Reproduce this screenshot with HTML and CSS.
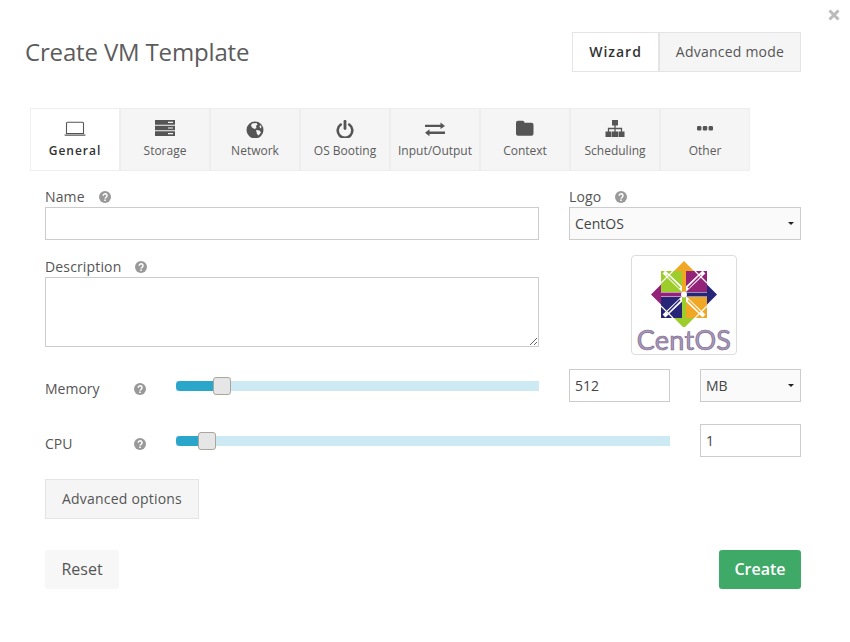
FILE: index.html
```html
<!DOCTYPE html>
<html lang="en">
<head>
  <meta charset="UTF-8" />
  <title>Create VM Template</title>
  <link rel="stylesheet" href="styles.css">
</head>
<body>
  <svg class="close" viewBox="0 0 12 12"><path d="M1.500 1.500l9 9M10.500 1.500l-9 9" /></svg>

  <div class="header">
    <h1 class="title">Create VM Template</h1>
    <div class="mode-switch">
      <button class="mode active">Wizard</button>
      <button class="mode">Advanced mode</button>
    </div>
  </div>

  <div class="tabs">
    <div class="tab active">
      <svg class="tab-icon" viewBox="0 0 24 18"><path d="M4.500 2.200h15a1 1 0 0 1 1 1v10.300h-17V3.200a1 1 0 0 1 1-1z" fill="none" stroke="currentColor" stroke-width="1.100"/><path d="M1.500 14.400h21v.6a.8.8 0 0 1-.8.8H2.300a.8.8 0 0 1-.8-.8z"/></svg>
      General
    </div>
    <div class="tab">
      <svg class="tab-icon" viewBox="0 0 24 18"><path d="M2 0h20v4.700H2zM2 5.700h20v4.600H2zM2 11.300h20V16H2z"/><path d="M15 1.700h5v1.200h-5zM15 7.400h5v1.200h-5zM15 13h5v1.200h-5z" fill="#f5f5f5"/></svg>
      Storage
    </div>
    <div class="tab">
      <svg class="tab-icon" viewBox="0 0 24 18"><circle cx="12" cy="10" r="8.500"/><path d="M9 3.500l4.500-.5 1 1.500-1.500 1.500.5 2-2 1-2.500-1.500-1-2zM13 10l3.500.5 1.500 2-2.500 3-1.500-1.500zM17 5l1.500 1.500-.5 2-1.500-1.500z" fill="#f5f5f5"/></svg>
      Network
    </div>
    <div class="tab">
      <svg class="tab-icon" viewBox="0 0 24 18"><path d="M7.800 4.500a7.300 7.300 0 1 0 8.400 0" fill="none" stroke="currentColor" stroke-width="2.600" stroke-linecap="round"/><path d="M12 1.300v7.200" fill="none" stroke="currentColor" stroke-width="2.800" stroke-linecap="round"/></svg>
      OS Booting
    </div>
    <div class="tab">
      <svg class="tab-icon" viewBox="0 0 24 18"><path d="M2 4.700h15.500V2.400L22 5.900l-4.500 3.200V6.900H2zM22 11.400H6.500V9.200L2 12.700l4.500 3.500v-2.300H22z"/></svg>
      Input/Output
    </div>
    <div class="tab">
      <svg class="tab-icon" viewBox="0 0 24 18"><path d="M5 .7h4.500a2 2 0 0 1 2 2h7a2 2 0 0 1 2 2v9a2 2 0 0 1-2 2H5a2 2 0 0 1-2-2v-11a2 2 0 0 1 2-2z"/></svg>
      Context
    </div>
    <div class="tab">
      <svg class="tab-icon" viewBox="0 0 24 18"><path d="M9 0h6v5.500h-6zM2.500 11.500h6V17h-6zM9 11.500h6V17H9zM15.500 11.500h6V17h-6z"/><path d="M5.500 12V8.500h13V12M12 5v7" fill="none" stroke="currentColor" stroke-width="1.300"/></svg>
      Scheduling
    </div>
    <div class="tab">
      <svg class="tab-icon" viewBox="0 0 24 18"><rect x="4" y="6" width="4.400" height="4.400" rx="1.200"/><rect x="9.800" y="6" width="4.400" height="4.400" rx="1.200"/><rect x="15.600" y="6" width="4.400" height="4.400" rx="1.200"/></svg>
      Other
    </div>
  </div>

  <form class="form">
    <div class="top-fields">
      <div class="col-main">
        <label class="label">Name <svg class="help" viewBox="0 0 12 12"><circle cx="6" cy="6" r="6"/><path d="M4.200 4.700a1.900 1.900 0 1 1 2.900 1.600c-.8.500-1.100.7-1.100 1.300" fill="none" stroke="#fff" stroke-width="1.500"/><path d="M5.200 8.500h1.600v1.500H5.200z" fill="#fff"/></svg></label>
        <input class="field field-name" type="text">
        <label class="label label-desc">Description <svg class="help" viewBox="0 0 12 12"><circle cx="6" cy="6" r="6"/><path d="M4.200 4.700a1.900 1.900 0 1 1 2.900 1.600c-.8.500-1.100.7-1.100 1.300" fill="none" stroke="#fff" stroke-width="1.500"/><path d="M5.200 8.500h1.600v1.500H5.200z" fill="#fff"/></svg></label>
        <textarea class="field field-desc"></textarea>
      </div>
      <div class="col-side">
        <label class="label">Logo <svg class="help" viewBox="0 0 12 12"><circle cx="6" cy="6" r="6"/><path d="M4.200 4.700a1.900 1.900 0 1 1 2.900 1.600c-.8.500-1.100.7-1.100 1.300" fill="none" stroke="#fff" stroke-width="1.500"/><path d="M5.200 8.500h1.600v1.500H5.200z" fill="#fff"/></svg></label>
        <div class="select-wrap">
          <select class="select"><option>CentOS</option></select>
        </div>
        <div class="logo-box">
          <svg class="logo-mark" viewBox="0 0 106 72">
            <path d="M30 16h21v21H30z" fill="#9ccd2a"/>
            <path d="M55 16h21v21H55z" fill="#932279"/>
            <path d="M30 42h21v21H30z" fill="#262577"/>
            <path d="M55 42h21v21H55z" fill="#efa724"/>
            <path d="M53 36L33 17M53 36l20-19M53 42L33 61M53 42l20 19" stroke="#fff" stroke-width="4"/>
            <path d="M49 33L36 20" stroke="#9ccd2a" stroke-width="1.500"/>
            <path d="M57 33l13-13" stroke="#932279" stroke-width="1.500"/>
            <path d="M49 45L36 58" stroke="#262577" stroke-width="1.500"/>
            <path d="M57 45l13 13" stroke="#efa724" stroke-width="1.500"/>
            <path d="M42 16L30 28M64 16l12 12M42 63L30 51M64 63l12-12" stroke="#fff" stroke-width="1.200"/>
            <path d="M53 6l10 10h-8v21h-4V16h-8z" fill="#efa724"/>
            <path d="M86 39.500l-10 10v-8H55v-4h21v-8z" fill="#262577"/>
            <path d="M53 73L43 63h8V42h4v21h8z" fill="#9ccd2a"/>
            <path d="M20 39.500l10-10v8h21v4H30v8z" fill="#932279"/>
            <circle cx="53" cy="39.500" r="3" fill="#fff"/>
          </svg>
          <span class="logo-name">CentOS</span>
        </div>
      </div>
    </div>

    <div class="slider-row slider-row-mem">
      <label class="slider-label">Memory <svg class="help" viewBox="0 0 12 12"><circle cx="6" cy="6" r="6"/><path d="M4.200 4.700a1.900 1.900 0 1 1 2.900 1.600c-.8.500-1.100.7-1.100 1.300" fill="none" stroke="#fff" stroke-width="1.500"/><path d="M5.200 8.500h1.600v1.500H5.200z" fill="#fff"/></svg></label>
      <div class="slider">
        <div class="slider-fill" style="width: 46px"></div>
        <div class="slider-thumb" style="left: 37px"></div>
      </div>
      <input class="field field-num" type="text" value="512">
      <div class="select-wrap select-unit">
        <select class="select"><option>MB</option></select>
      </div>
    </div>

    <div class="slider-row slider-row-cpu">
      <label class="slider-label">CPU <svg class="help" viewBox="0 0 12 12"><circle cx="6" cy="6" r="6"/><path d="M4.200 4.700a1.900 1.900 0 1 1 2.900 1.600c-.8.500-1.100.7-1.100 1.300" fill="none" stroke="#fff" stroke-width="1.500"/><path d="M5.200 8.500h1.600v1.500H5.200z" fill="#fff"/></svg></label>
      <div class="slider">
        <div class="slider-fill" style="width: 31px"></div>
        <div class="slider-thumb" style="left: 22px"></div>
      </div>
      <input class="field field-num" type="text" value="1">
    </div>

    <button type="button" class="btn-options">Advanced options</button>

    <div class="actions">
      <button type="button" class="btn-reset">Reset</button>
      <button type="button" class="btn-create">Create</button>
    </div>
  </form>
</body>
</html>
```

FILE: styles.css
```css
body {
  margin: 0;
  background: #fff;
  color: #555;
  font-family: "Open Sans", sans-serif;
  font-size: 14px;
}
button, input, select, textarea {
  font-family: inherit;
  box-sizing: border-box;
}
.close {
  position: absolute;
  top: 9px;
  left: 828px;
  width: 12px;
  height: 12px;
  fill: none;
  stroke: #bbb;
  stroke-width: 3;
}
.header {
  display: flex;
  justify-content: space-between;
  align-items: center;
  padding: 32px 49px 0 25px;
}
.title {
  margin: 0 0 2px;
  font-size: 24px;
  font-weight: 400;
  letter-spacing: -.16px;
  color: #5c5c5c;
}
.mode-switch {
  display: flex;
}
.mode {
  height: 40px;
  border: 1px solid #e4e4e4;
  background: #f5f5f5;
  color: #555;
  font-size: 14px;
  letter-spacing: .23px;
  width: 142px;
  padding: 0 0 2px;
}
.mode.active {
  width: 87px;
  background: #fff;
  color: #333;
  font-weight: 600;
  letter-spacing: 1px;
}
.tabs {
  display: flex;
  margin: 36px 0 0 30px;
}
.tab {
  box-sizing: border-box;
  width: 90px;
  height: 63px;
  padding-top: 11px;
  border: 1px solid #eee;
  background: #f5f5f5;
  color: #5c5c5c;
  font-size: 12px;
  line-height: 20px;
  text-align: center;
}
.tab.active {
  background: #fff;
  color: #333;
  font-weight: 600;
  letter-spacing: 1px;
}
.tab-icon {
  display: block;
  width: 24px;
  height: 18px;
  margin: 0 auto 3px;
  fill: currentColor;
  color: #555;
}
.form {
  padding: 16px 49px 0 45px;
}
.top-fields {
  display: flex;
  gap: 30px;
}
.col-main {
  width: 494px;
}
.col-side {
  width: 232px;
}
.label {
  display: block;
  height: 20px;
  line-height: 20px;
  font-size: 14px;
  letter-spacing: .15px;
}
.help {
  width: 12px;
  height: 12px;
  margin-left: 10px;
  fill: #999;
  vertical-align: -1px;
}
.label-desc {
  margin-top: 17px;
}
.field {
  display: block;
  border: 1px solid #ccc;
  background: #fff;
  color: #444;
  font-size: 14px;
  padding: 0 5px;
  outline: none;
}
.field-name {
  width: 100%;
  height: 33px;
}
.field-desc {
  width: 100%;
  height: 70px;
  margin: 0;
}
.select-wrap {
  position: relative;
  height: 33px;
}
.select-wrap::after {
  content: "";
  position: absolute;
  top: 15px;
  right: 7px;
  border: 3px solid transparent;
  border-top-color: #222;
  border-bottom: 0;
}
.select {
  appearance: none;
  display: block;
  width: 100%;
  height: 100%;
  border: 1px solid #ccc;
  border-radius: 0;
  background: #fafafa;
  color: #444;
  font-size: 14px;
  padding: 0 5px;
}
.logo-box {
  box-sizing: border-box;
  width: 106px;
  height: 100px;
  margin: 15px 0 0 62px;
  border: 1px solid #ddd;
  border-radius: 4px;
  text-align: center;
}
.logo-mark {
  display: block;
  width: 106px;
  height: 72px;
  margin: -1px 0 0 -1px;
}
.logo-name {
  display: block;
  margin-top: 0;
  line-height: 26px;
  font-family: "Lato", sans-serif;
  font-size: 27px;
  font-weight: 400;
  letter-spacing: .3px;
  color: #a997b8;
  -webkit-text-stroke: .7px #7d6a90;
}
.slider-row {
  display: flex;
  align-items: center;
  height: 33px;
}
.slider-row-mem {
  margin-top: 14px;
}
.slider-row-cpu {
  margin-top: 22px;
}
.slider-label {
  display: flex;
  justify-content: space-between;
  width: 131px;
  padding-right: 30px;
  box-sizing: border-box;
  align-items: center;
  margin-top: 6px;
}
.slider-label .help {
  margin: 0;
}
.slider {
  position: relative;
  flex: 1;
  height: 10px;
  background: #cdeaf4;
}
.slider-fill {
  height: 100%;
  background: #2ba6cb;
  border-radius: 4px 0 0 4px;
}
.slider-thumb {
  position: absolute;
  top: -4px;
  box-sizing: border-box;
  width: 18px;
  height: 18px;
  background: #e6e6e6;
  border: 1px solid #aaa69e;
  border-radius: 3px;
}
.field-num {
  width: 101px;
  height: 33px;
  margin-left: 30px;
}
.select-unit {
  width: 101px;
  margin-left: 30px;
}
.btn-options {
  display: block;
  width: 154px;
  height: 40px;
  margin-top: 22px;
  padding: 0 0 2px;
  border: 1px solid #e4e4e4;
  background: #f5f5f5;
  color: #555;
  font-size: 14px;
  letter-spacing: .2px;
}
.actions {
  display: flex;
  justify-content: space-between;
  margin-top: 31px;
}
.btn-reset, .btn-create {
  height: 39px;
  padding: 0 0 2px;
  border: 0;
  border-radius: 3px;
  font-size: 16px;
}
.btn-reset {
  width: 74px;
  background: #f7f7f7;
  color: #555;
}
.btn-create {
  width: 82px;
  background: #3fa968;
  color: #fff;
  font-weight: 600;
}
```
